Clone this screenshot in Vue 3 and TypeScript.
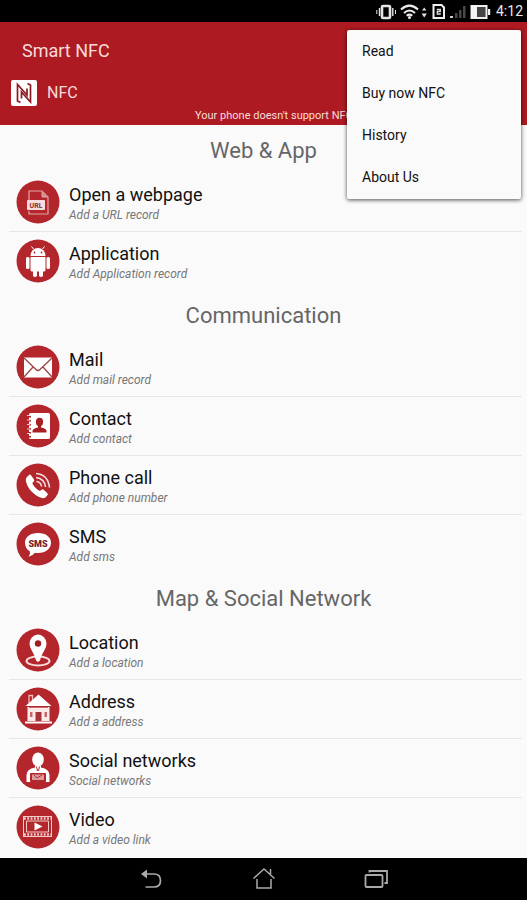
<script setup lang="ts">
import { ref } from 'vue'

interface RecordItem {
  icon: string
  title: string
  hint: string
}

interface Section {
  name: string
  items: RecordItem[]
}

const menuOpen = ref(true)
const menuItems: string[] = ['Read', 'Buy now NFC', 'History', 'About Us']

const sections: Section[] = [
  {
    name: 'Web & App',
    items: [
      { icon: 'url', title: 'Open a webpage', hint: 'Add a URL record' },
      { icon: 'android', title: 'Application', hint: 'Add Application record' },
    ],
  },
  {
    name: 'Communication',
    items: [
      { icon: 'mail', title: 'Mail', hint: 'Add mail record' },
      { icon: 'contact', title: 'Contact', hint: 'Add contact' },
      { icon: 'phone', title: 'Phone call', hint: 'Add phone number' },
      { icon: 'sms', title: 'SMS', hint: 'Add sms' },
    ],
  },
  {
    name: 'Map & Social Network',
    items: [
      { icon: 'location', title: 'Location', hint: 'Add a location' },
      { icon: 'address', title: 'Address', hint: 'Add a address' },
      { icon: 'social', title: 'Social networks', hint: 'Social networks' },
      { icon: 'video', title: 'Video', hint: 'Add a video link' },
    ],
  },
]
</script>

<template>
  <div class="screen">
    <div class="status">
      <svg class="status-icons" viewBox="0 0 116 20" aria-hidden="true">
        <!-- vibrate -->
        <g fill="none" stroke="#e4e4e4">
          <rect x="6" y="5" width="8" height="12" rx="1" stroke-width="2.6" />
          <path d="M3.500 7v8M16.800 7v8" stroke-width="1.400" />
          <path d="M.8 9v4M19.500 9v4" stroke-width="1" />
        </g>
        <!-- wifi -->
        <g fill="none" stroke="#ededed" stroke-width="2">
          <path d="M25 8.500Q33.500 0.800 42 8.500M28 12Q33.500 7 39 12" />
          <path d="M30.700 14.800Q33.500 12.500 36.300 14.800" />
        </g>
        <circle cx="33.500" cy="16.500" r="1.500" fill="#ededed" />
        <path d="M46 9.500l2.200-3 2.200 3zM45.500 12.500h5.400l-2.700 4z" fill="#dcdcdc" />
        <!-- sim card -->
        <path d="M57.500 4h8l2.500 2.500V17H57.500z" fill="none" stroke="#f0f0f0" stroke-width="2" />
        <path d="M60.800 8.500h3.500v2h-3v2.500h3.500" fill="none" stroke="#ddd" stroke-width="1.300" />
        <!-- signal -->
        <path d="M74 15h3v2h-3z" fill="#ccc" />
        <path d="M79 12h2.500v5H79zM83 9h2.500v8H83zM87 5h2.500v12H87z" fill="#484848" />
        <!-- battery -->
        <rect x="95.500" y="5" width="15" height="12" fill="#454545" stroke="#eee" stroke-width="2" />
        <path d="M95 4h6v14h-6zM112 8h2.200v6H112z" fill="#f4f4f4" />
      </svg>
      <time class="clock">4:12</time>
    </div>

    <header class="header">
      <h1 class="app-title">Smart NFC</h1>
      <div class="nfc-row">
        <svg class="nfc-logo" viewBox="0 0 26 26" aria-hidden="true">
          <rect width="26" height="26" rx="2" fill="#fff" />
          <g fill="none" stroke="#8e1a20" stroke-width="1.700">
            <path d="M9.500 22.500L6.500 21V4.500l9.500 10.500V8.500" />
            <path d="M16.500 3.500l3 1.500v17L10.500 12v6.500" />
          </g>
        </svg>
        <span>NFC</span>
      </div>
      <p class="notice">Your phone doesn't support NFC</p>
    </header>

    <nav v-if="menuOpen" class="menu" aria-label="Options">
      <button v-for="entry in menuItems" :key="entry" type="button" @click="menuOpen = false">
        {{ entry }}
      </button>
    </nav>

    <main class="content">
      <section v-for="section in sections" :key="section.name">
        <h2>{{ section.name }}</h2>
        <ul>
          <li v-for="item in section.items" :key="item.title">
            <button type="button" class="row">
              <svg class="badge" viewBox="0 0 44 44" aria-hidden="true">
                <circle cx="22" cy="22" r="21.500" fill="#b3262b" />

                <g v-if="item.icon === 'url'">
                  <path d="M13 20v-9h13l6 6v17H13v-3" fill="none" stroke="#e3a4a4" stroke-width="1.200" />
                  <path d="M26 11v6h6" fill="#d88e8e" stroke="#e3a4a4" />
                  <rect x="11" y="20" width="18" height="10" rx="1" fill="#f7dddd" />
                  <text x="20" y="28" text-anchor="middle" class="url-text">URL</text>
                </g>

                <g v-else-if="item.icon === 'android'" fill="#fff">
                  <path d="M14.500 17a7.500 8 0 0 1 15 0z" />
                  <path d="M17.500 10l-2-2.500M26.500 10l2-2.500" stroke="#fff" />
                  <path d="M14.500 18h15v13a1.500 1.500 0 0 1-1.500 1.500H16a1.500 1.500 0 0 1-1.500-1.500z" />
                  <rect x="10" y="18" width="3.500" height="12" rx="1.500" />
                  <rect x="30.500" y="18" width="3.500" height="12" rx="1.500" />
                  <rect x="17" y="30" width="4" height="8" rx="1.800" />
                  <rect x="23" y="30" width="4" height="8" rx="1.800" />
                  <circle cx="18.500" cy="13.500" r=".9" fill="#b3262b" />
                  <circle cx="25.500" cy="13.500" r=".9" fill="#b3262b" />
                </g>

                <g v-else-if="item.icon === 'mail'">
                  <rect x="8" y="12.500" width="28" height="20" fill="#fff" />
                  <path
                    d="M8 13l12 11.500q2 2 4 0L36 13M8 32l9-10M36 32l-9-10"
                    fill="none"
                    stroke="#9b4448"
                    stroke-width="1.300"
                  />
                </g>

                <g v-else-if="item.icon === 'contact'">
                  <rect x="13" y="9" width="21" height="26" rx="1.500" fill="#fff" />
                  <path d="M14 12v22" stroke="#b3262b" stroke-width="2" stroke-dasharray="1.500 2.500" />
                  <path d="M11 11.500h3M11 16h3M11 20.500h3M11 25h3M11 29.500h3" stroke="#f2caca" />
                  <ellipse cx="23.500" cy="18" rx="3.600" ry="4.200" fill="#a81e24" />
                  <path
                    d="M22 20h3v3.500q5.500 1 5.500 3.500v1.500h-14V27q0-2.500 5.500-3.500z"
                    fill="#a81e24"
                  />
                </g>

                <g v-else-if="item.icon === 'phone'">
                  <path
                    d="M10.500 14.500l2.500-2.500q1-1 2 .3l3 4.200q.8 1.200-.3 2.200l-1.400 1.300q1.500 4.500 7.500 8l1.900-1.300q1.200-.8 2.200.2l3.500 3.300q1 1 0 2l-2 2.200q-3 2.200-9.500-2.200-8.500-6-10-14.200-.4-2.200.6-3.500z"
                    fill="#fff"
                  />
                  <g fill="none" stroke="#f6dada" stroke-width="1.700">
                    <path d="M20 10.500q12 1 13.500 14" />
                    <path d="M20 14.500q8.500 1 9.500 9.500" />
                    <path d="M20.500 18.500q4.500.5 5 5" />
                  </g>
                </g>

                <g v-else-if="item.icon === 'sms'">
                  <path
                    d="M22 11c8 0 13 4 13 9.800S30 31 22 31q-2 0-3-.2-2.500 3.200-6.500 4 2.200-3 1.300-5.500Q9 26.500 9 20.800C9 15 14 11 22 11z"
                    fill="#fff"
                  />
                  <text x="22" y="24.500" text-anchor="middle" class="sms-text">SMS</text>
                </g>

                <g v-else-if="item.icon === 'location'">
                  <ellipse cx="22" cy="33" rx="11.500" ry="4.500" fill="none" stroke="#f8dcdc" stroke-width="2" />
                  <path
                    d="M22 34l-2-1.500q-1-5-4-9.500-2.500-3.500-2.500-7.500a8.500 9 0 0 1 17 0q0 4-2.500 7.500-3 4.500-4 9.500z"
                    fill="#fff"
                  />
                  <circle cx="22" cy="15.500" r="3.200" fill="#9e2026" />
                </g>

                <g v-else-if="item.icon === 'address'">
                  <path d="M13 16V8.500h3.500V13" fill="none" stroke="#eeb9b9" stroke-width="1.300" />
                  <path d="M22.500 7.500l13 11.500H9.500z" fill="#fff" />
                  <path d="M11.500 20h22v14h-22z" fill="#fbeaea" />
                  <path d="M13 20.500h19" stroke="#c96a6d" />
                  <path d="M19.500 25h6v9h-6z" fill="#a5343a" />
                  <path d="M14 25h2.500v5H14zM28.500 25H31v5h-2.500z" fill="#c4686c" />
                  <path d="M9 35.500h27" stroke="#fff" stroke-width="2" />
                </g>

                <g v-else-if="item.icon === 'social'">
                  <ellipse cx="22" cy="13.500" rx="5.800" ry="7" fill="#fff" />
                  <path
                    d="M19 20h6v1.500q8.500 1.500 8.500 7.500v7h-23v-7q0-6 8.500-7.500z"
                    fill="#fff"
                  />
                  <path d="M20.500 20.500l1 4.500M23.500 20.500l-1 4.500" stroke="#a5343a" />
                  <rect x="14" y="27" width="16" height="9" rx="1" fill="#b3262b" />
                  <rect x="16" y="28.500" width="12" height="5.500" fill="#dc9c9c" />
                  <path d="M18 29l3 3 5-3M20 35.500h4" fill="none" stroke="#a5343a" />
                </g>

                <g v-else>
                  <rect x="7.500" y="11.500" width="28" height="20" fill="none" stroke="#f2caca" />
                  <path
                    d="M8 13.500h27M8 29.500h27"
                    stroke="#f2caca"
                    stroke-width="2.500"
                    stroke-dasharray="1.800 1.500"
                  />
                  <path d="M10.500 16h22v11h-22z" fill="#b3262b" stroke="#f2caca" />
                  <path d="M18.500 17.500l8 4-8 4z" fill="#fff" />
                </g>
              </svg>
              <span class="labels">
                <span class="title">{{ item.title }}</span>
                <span class="hint">{{ item.hint }}</span>
              </span>
            </button>
          </li>
        </ul>
      </section>
    </main>

    <footer class="navbar">
      <button type="button" aria-label="Back">
        <svg viewBox="0 0 24 24">
          <path d="M5 7h9q6.500 0 6.500 6.500T14 20H5.500" fill="none" stroke="#aaa" stroke-width="1.700" />
          <path d="M1 7l6-4.500v9z" fill="#aaa" />
        </svg>
      </button>
      <button type="button" aria-label="Home">
        <svg viewBox="0 0 24 24" fill="none" stroke="#aaa" stroke-width="1.500">
          <path d="M1.500 11.500L12 2l10.500 9.500M5 12v9h14v-9M18.500 7V2" />
        </svg>
      </button>
      <button type="button" aria-label="Recent apps" @click="menuOpen = !menuOpen">
        <svg viewBox="0 0 24 24" fill="none" stroke="#aaa">
          <rect x="1.500" y="8" width="17" height="12" rx="1" stroke-width="1.800" />
          <path d="M5.500 5.500V4H23v12h-2.500" stroke-width="1.800" />
        </svg>
      </button>
    </footer>
  </div>
</template>

<style>
body {
  margin: 0;
  background: #fafafa;
}
</style>

<style scoped>
.screen {
  position: relative;
  display: flex;
  flex-direction: column;
  min-height: 100vh;
  background: #fafafa;
  color: #111;
  font-family: Roboto, "Liberation Sans", sans-serif;
}

button {
  border: 0;
  padding: 0;
  background: none;
  color: inherit;
  font: inherit;
  text-align: left;
  cursor: pointer;
}

.status {
  display: flex;
  align-items: center;
  justify-content: flex-end;
  gap: 4px;
  height: 22px;
  padding-right: 4px;
  background: #000;
  color: #e8e8e8;
}

.status-icons {
  width: 116px;
  height: 20px;
}

.clock {
  font-size: 14px;
  line-height: 20px;
}

.header {
  background: #ae1a21;
  color: #f6dcdc;
}

.app-title {
  margin: 0;
  padding: 17px 22px 0;
  font-size: 18px;
  font-weight: 400;
  line-height: 24px;
}

.nfc-row {
  display: flex;
  align-items: center;
  gap: 10px;
  padding: 17px 11px 0;
  font-size: 16px;
  line-height: 26px;
}

.nfc-logo {
  width: 26px;
  height: 26px;
}

.notice {
  margin: 0;
  padding: 3px 0 2px 195px;
  font-size: 11px;
  line-height: 14px;
  white-space: nowrap;
}

.menu {
  position: absolute;
  top: 30px;
  right: 6px;
  display: flex;
  flex-direction: column;
  width: 174px;
  padding-bottom: 1px;
  border-radius: 2px;
  background: #fafafa;
  box-shadow: 0 1px 4px rgba(0, 0, 0, 0.7);
}

.menu button {
  height: 42px;
  padding: 0 15px;
  font-size: 14px;
}

.content {
  flex: 1;
}

h2 {
  margin: 0;
  padding-top: 4px;
  color: #666;
  font-size: 22px;
  font-weight: 400;
  line-height: 44px;
  text-align: center;
}

ul {
  margin: 0;
  padding: 0 5px 0 9px;
  list-style: none;
}

li + li {
  border-top: 1px solid #e6e6e6;
}

.row {
  display: flex;
  align-items: center;
  gap: 9px;
  width: 100%;
  height: 58px;
  padding-left: 7px;
}

.badge {
  flex: none;
  width: 44px;
  height: 44px;
}

.labels {
  display: flex;
  flex-direction: column;
  padding-top: 4px;
}

.title {
  font-size: 18px;
  line-height: 22px;
}

.hint {
  color: #777;
  font-size: 12px;
  font-style: italic;
  line-height: 18px;
}

.url-text {
  fill: #8e2a30;
  font-size: 7px;
  font-weight: 700;
}

.sms-text {
  fill: #7d2025;
  font-size: 9px;
  font-weight: 900;
}

.navbar {
  display: flex;
  justify-content: center;
  gap: 88px;
  height: 42px;
  background: #000;
}

.navbar button {
  display: grid;
  place-items: center;
  width: 24px;
}

.navbar svg {
  width: 24px;
  height: 24px;
}
</style>
